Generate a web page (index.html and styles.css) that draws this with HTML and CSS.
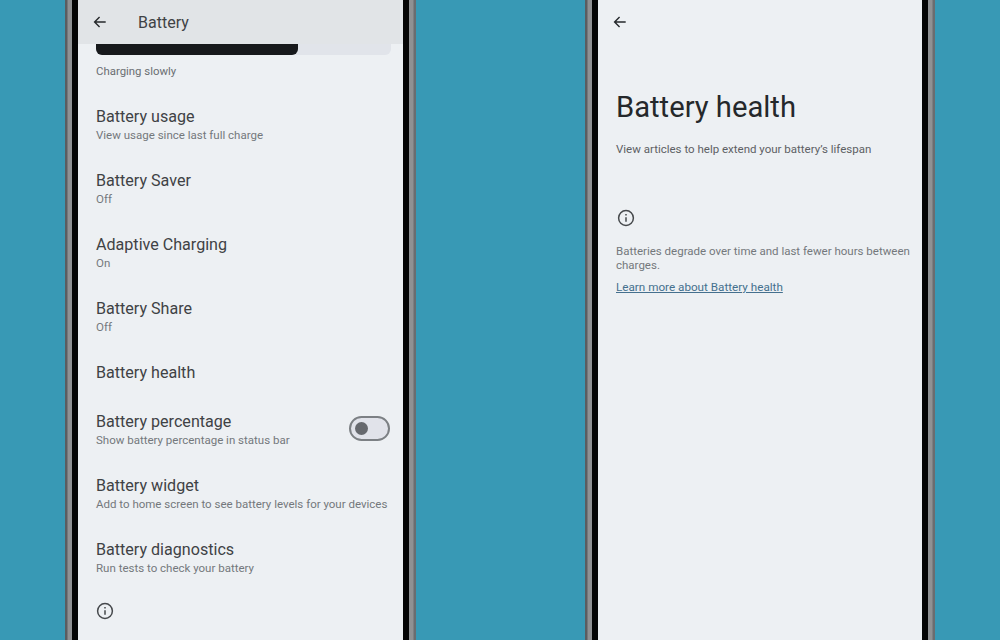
FILE: index.html
```html
<!DOCTYPE html>
<html lang="en">
<head>
    <meta charset="UTF-8">
    <title>Battery settings</title>
    <link rel="stylesheet" href="styles.css">
</head>
<body>
    <!-- Battery settings list -->
    <div class="phone phone-left">
        <div class="bezel">
            <div class="screen">
                <header class="topbar topbar-shaded">
                    <svg class="back" viewBox="0 0 16 16"><path d="M14.5 8H2M7.5 2.2 1.8 8l5.7 5.8"/></svg>
                    <span class="topbar-title">Battery</span>
                </header>
                <div class="level">
                    <div class="level-track"><div class="level-fill"></div></div>
                    <p class="level-text">Charging slowly</p>
                </div>
                <div class="row">
                    <div class="row-title">Battery usage</div>
                    <div class="row-sub">View usage since last full charge</div>
                </div>
                <div class="row">
                    <div class="row-title">Battery Saver</div>
                    <div class="row-sub">Off</div>
                </div>
                <div class="row">
                    <div class="row-title">Adaptive Charging</div>
                    <div class="row-sub">On</div>
                </div>
                <div class="row">
                    <div class="row-title">Battery Share</div>
                    <div class="row-sub">Off</div>
                </div>
                <div class="row row-single">
                    <div class="row-title">Battery health</div>
                </div>
                <div class="row row-toggle">
                    <div>
                        <div class="row-title">Battery percentage</div>
                        <div class="row-sub">Show battery percentage in status bar</div>
                    </div>
                    <div class="switch"><span class="switch-knob"></span></div>
                </div>
                <div class="row">
                    <div class="row-title">Battery widget</div>
                    <div class="row-sub">Add to home screen to see battery levels for your devices</div>
                </div>
                <div class="row">
                    <div class="row-title">Battery diagnostics</div>
                    <div class="row-sub">Run tests to check your battery</div>
                </div>
                <svg class="info info-list" viewBox="0 0 18 18"><circle cx="9" cy="9" r="7.4"/><path d="M9 8.2v4.6M9 5v1.6"/></svg>
                <p class="footnote">Battery usage data is approximate and can change based on usage</p>
            </div>
        </div>
    </div>

    <!-- Battery health page -->
    <div class="phone phone-right">
        <div class="bezel">
            <div class="screen">
                <header class="topbar">
                    <svg class="back" viewBox="0 0 16 16"><path d="M14.5 8H2M7.5 2.2 1.8 8l5.7 5.8"/></svg>
                </header>
                <div class="health">
                    <h1>Battery health</h1>
                    <p class="health-sub">View articles to help extend your battery’s lifespan</p>
                    <svg class="info" viewBox="0 0 18 18"><circle cx="9" cy="9" r="7.4"/><path d="M9 8.2v4.6M9 5v1.6"/></svg>
                    <p class="health-text">Batteries degrade over time and last fewer hours between charges.</p>
                    <a class="health-link" href="#">Learn more about Battery health</a>
                </div>
            </div>
        </div>
    </div>
</body>
</html>
```

FILE: styles.css
```css
body, html {
    margin: 0;
    padding: 0;
    height: 100%;
    overflow: hidden;
}
body {
    display: flex;
    background-color: #3899b5;
    font-family: Roboto, "Open Sans", sans-serif;
    color: #2b2e31;
}
.phone {
    height: 640px;
    box-sizing: border-box;
    padding: 0 7px;
    background: linear-gradient(90deg, #5a5d60 0, #5a5d60 2px, #8f9193 3px, #8f9193 calc(100% - 3px), #6a6d70 calc(100% - 2px));
}
.phone-left {
    width: 351px;
    margin-left: 65px;
}
.phone-right {
    width: 350px;
    margin-left: 169px;
}
.bezel {
    height: 100%;
    box-sizing: border-box;
    padding: 0 6px;
    background-color: #050505;
}
.screen {
    height: 100%;
    overflow: hidden;
    background-color: #edf0f3;
}
.topbar {
    display: flex;
    align-items: center;
    height: 44px;
    padding-left: 15px;
}
.topbar-shaded {
    background-color: #e1e4e7;
}
.back {
    width: 14px;
    height: 14px;
    fill: none;
    stroke: #26292c;
    stroke-width: 1.6;
}
.topbar-title {
    margin-left: 31px;
    font-size: 16px;
    color: #3f4245;
}
.level {
    padding: 0 12px 0 18px;
}
.level-track {
    height: 11px;
    border-radius: 0 0 6px 6px;
    background-color: #e1e4ea;
}
.level-fill {
    width: 202px;
    height: 100%;
    border-radius: 0 0 6px 6px;
    background-color: #17191c;
}
.level-text {
    margin: 10px 0 0;
    font-size: 11.4px;
    line-height: 12px;
    color: #6a6e72;
}
.row {
    padding: 13.6px 10px 13.6px 18px;
}
.level + .row {
    margin-top: 16px;
}
.row-single {
    padding-bottom: 14.6px;
}
.row-toggle {
    display: flex;
    align-items: center;
    justify-content: space-between;
    padding-right: 13px;
}
.row-title {
    font-size: 16.1px;
    line-height: 20px;
    color: #3f4245;
}
.row-sub {
    font-size: 11.5px;
    line-height: 17px;
    color: #74787c;
}
.switch {
    display: flex;
    align-items: center;
    box-sizing: border-box;
    width: 41px;
    height: 25px;
    margin-bottom: 3px;
    padding-left: 4px;
    border: 2px solid #7c8084;
    border-radius: 13px;
    background-color: #e1e3ea;
}
.switch-knob {
    width: 13px;
    height: 13px;
    border-radius: 50%;
    background-color: #66696e;
}
.info {
    display: block;
    width: 18px;
    height: 18px;
    fill: none;
    stroke: #46494c;
    stroke-width: 1.5;
}
.info-list {
    margin: 11.5px 0 0 18px;
}
.footnote {
    margin: 17px 12px 0 18px;
    font-size: 11.4px;
    line-height: 14px;
    color: #a9adb2;
}
.health {
    padding: 43px 12px 0 18px;
}
.health h1 {
    margin: 0;
    font-size: 29.2px;
    font-weight: 400;
    line-height: 40px;
    color: #25282b;
}
.health-sub {
    margin: 14px 0 0;
    font-size: 11.5px;
    line-height: 16px;
    color: #5d6064;
}
.health .info {
    margin: 52px 0 0 1px;
}
.health-text {
    margin: 17px 0 0;
    font-size: 11.5px;
    line-height: 14px;
    color: #74787c;
}
.health-link {
    display: inline-block;
    margin-top: 8px;
    font-size: 11.7px;
    line-height: 14px;
    color: #45708e;
}
```
